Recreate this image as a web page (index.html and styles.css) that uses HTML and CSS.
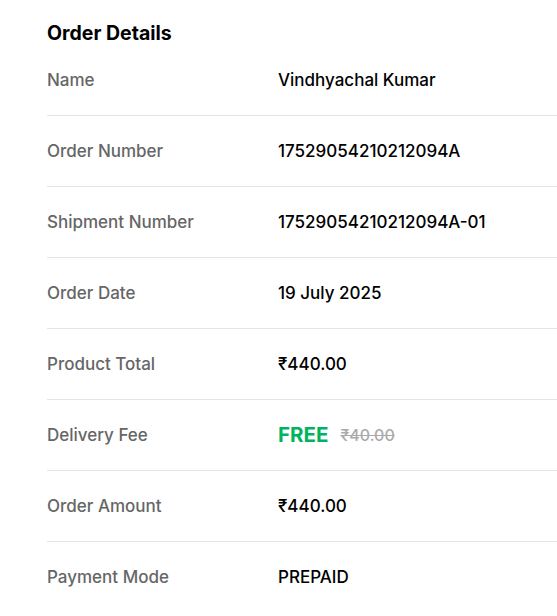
FILE: index.html
```html
<!DOCTYPE html>
<html>
<head>
<meta charset="utf-8">
<link rel="stylesheet" href="styles.css">
</head>
<body>
<section class="order">
  <h2 class="title">Order Details</h2>
  <div class="row"><span class="label">Name</span><span class="value">Vindhyachal Kumar</span></div>
  <div class="row"><span class="label">Order Number</span><span class="value">17529054210212094A</span></div>
  <div class="row"><span class="label">Shipment Number</span><span class="value">17529054210212094A-01</span></div>
  <div class="row"><span class="label">Order Date</span><span class="value">19 July 2025</span></div>
  <div class="row"><span class="label">Product Total</span><span class="value">₹440.00</span></div>
  <div class="row"><span class="label">Delivery Fee</span><span class="value"><span class="free">FREE</span><span class="strike">₹40.00</span></span></div>
  <div class="row"><span class="label">Order Amount</span><span class="value">₹440.00</span></div>
  <div class="row last"><span class="label">Payment Mode</span><span class="value">PREPAID</span></div>
</section>
</body>
</html>
```
FILE: styles.css
```css
html, body {
  margin: 0;
  padding: 0;
  background: #fff;
}
body {
  font-family: Inter, "Noto Sans", sans-serif;
  color: #000;
}
.order {
  padding: 21px 0 0 47px;
}
.title {
  margin: 0;
  font-size: 19.5px;
  line-height: 24px;
  font-weight: 700;
  color: #000;
}
.row {
  display: flex;
  align-items: center;
  height: 70px;
  border-bottom: 1px solid #e4e4e4;
}
.row.last {
  border-bottom: none;
}
.label {
  width: 231px;
  font-size: 17px;
  line-height: 20px;
  font-weight: 500;
  color: #666;
}
.value {
  display: flex;
  align-items: center;
  font-size: 17px;
  line-height: 20px;
  font-weight: 500;
  color: #000;
}
.free {
  font-size: 20.5px;
  font-weight: 700;
  color: #00b35e;
}
.strike {
  margin-left: 12px;
  font-size: 16px;
  font-weight: 500;
  color: #aaa;
  text-decoration: line-through;
}
```
